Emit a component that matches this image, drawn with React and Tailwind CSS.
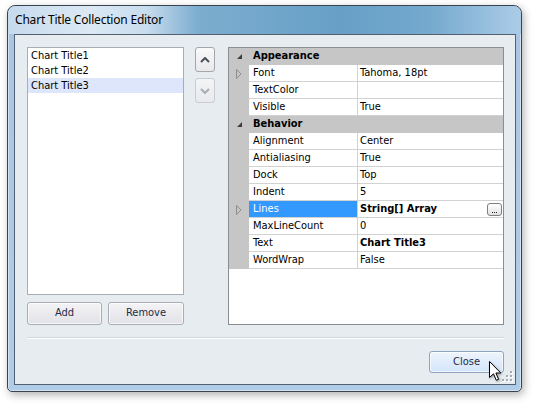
import React from 'react';

const body = "font-['DejaVu_Sans_Condensed','Liberation_Sans',sans-serif] text-[11px]";

const groups = [
  {
    name: 'Appearance',
    rows: [
      { name: 'Font', value: 'Tahoma, 18pt', expand: true },
      { name: 'TextColor', value: '' },
      { name: 'Visible', value: 'True' },
    ],
  },
  {
    name: 'Behavior',
    rows: [
      { name: 'Alignment', value: 'Center' },
      { name: 'Antialiasing', value: 'True' },
      { name: 'Dock', value: 'Top' },
      { name: 'Indent', value: '5' },
      { name: 'Lines', value: 'String[] Array', bold: true, expand: true, selected: true, ellipsis: true },
      { name: 'MaxLineCount', value: '0' },
      { name: 'Text', value: 'Chart Title3', bold: true },
      { name: 'WordWrap', value: 'False' },
    ],
  },
];

const Expanded = () => (
  <svg width="5" height="5" viewBox="0 0 5 5">
    <polygon points="5,0 5,5 0,5" fill="#3d3d3d" />
  </svg>
);

const Collapsed = () => (
  <svg width="6" height="10" viewBox="0 0 6 10">
    <polygon points="0.5,0.5 5,5 0.5,9.5" fill="none" stroke="#8f8f8f" />
  </svg>
);

const Chevron = ({ down, color }) => (
  <svg width="10" height="6" viewBox="0 0 10 6">
    <polyline
      points={down ? '1,1 5,5 9,1' : '1,5 5,1 9,5'}
      fill="none"
      stroke={color}
      strokeWidth="2"
    />
  </svg>
);

const PropRow = ({ row }) => (
  <div className="flex h-[17px]">
    <div className="w-[20px] shrink-0 bg-[#c6c6c6] flex items-center justify-center">
      {row.expand && <Collapsed />}
    </div>
    <div
      className={`w-[109px] shrink-0 border-b border-r border-[#d2d2d2] pl-[4px] leading-[16px] ${
        row.selected ? 'bg-[#3399ff] text-white' : 'bg-white text-black'
      }`}
    >
      {row.name}
    </div>
    <div className="flex-1 flex items-center justify-between border-b border-[#d2d2d2] bg-white pl-[2px] pr-[1px]">
      <span className={`leading-[16px] ${row.bold ? 'font-bold' : ''}`}>{row.value}</span>
      {row.ellipsis && (
        <div className="w-[15px] h-[13px] rounded-[3px] border border-[#7f7f7f] bg-gradient-to-b from-white to-[#e2e2e2] flex items-end justify-center gap-[1px] pb-[2px]">
          <div className="w-[1px] h-[1px] bg-[#222]" />
          <div className="w-[1px] h-[1px] bg-[#222]" />
          <div className="w-[1px] h-[1px] bg-[#222]" />
        </div>
      )}
    </div>
  </div>
);

const PropertyGrid = () => (
  <div className="w-[276px] h-[278px] border border-[#8a8d91] bg-white flex flex-col">
    {groups.map((g) => (
      <div key={g.name}>
        <div className="flex h-[17px] items-center bg-[#c6c6c6]">
          <div className="w-[20px] shrink-0 flex items-center justify-center">
            <Expanded />
          </div>
          <span className="pl-[4px] font-bold text-black">{g.name}</span>
        </div>
        {g.rows.map((r) => (
          <PropRow key={r.name} row={r} />
        ))}
      </div>
    ))}
  </div>
);

const Button = ({ children, className = '' }) => (
  <button
    className={`h-[23px] rounded-[3px] border border-[#a9adb3] bg-gradient-to-b from-[#f4f4f6] to-[#e1e1e7] text-[#1e2b48] shadow-[inset_0_0_0_1px_rgba(255,255,255,0.7)] ${className}`}
  >
    {children}
  </button>
);

const SizeGrip = () => {
  const dots = [
    [8, 0],
    [4, 4],
    [8, 4],
    [0, 8],
    [4, 8],
    [8, 8],
  ];
  return (
    <svg width="11" height="11" viewBox="0 0 11 11" className="absolute right-[2px] bottom-[2px]">
      {dots.map(([x, y]) => (
        <g key={`${x}-${y}`}>
          <rect x={x + 1} y={y + 1} width="2" height="2" fill="#ffffff" />
          <rect x={x} y={y} width="2" height="2" fill="#a3abb5" />
        </g>
      ))}
    </svg>
  );
};

const Cursor = () => (
  <svg
    width="14"
    height="22"
    viewBox="0 0 14 22"
    className="absolute left-[489px] top-[361px] drop-shadow-[1px_1px_1px_rgba(0,0,0,0.35)]"
  >
    <path
      d="M0.5,0.5 L0.5,16.5 L4.5,12.8 L7.3,19.3 L9.6,18.3 L6.9,12 L11.8,12 Z"
      fill="#ffffff"
      stroke="#000000"
      strokeWidth="1"
      strokeLinejoin="round"
    />
  </svg>
);

export default function App() {
  return (
    <div className={`relative w-[535px] h-[407px] bg-white pt-[5px] pl-[7px] ${body}`}>
      <div className="w-[515px] h-[387px] rounded-t-[8px] rounded-b-[5px] border border-[#39424f] bg-gradient-to-b from-[#a8c6e4] to-[#b0cde8] shadow-[inset_0_0_0_1px_rgba(255,255,255,0.45),2px_3px_9px_rgba(0,0,0,0.3)] flex flex-col overflow-hidden">
        <div className="h-[28px] shrink-0 flex items-center pl-[7px] rounded-t-[7px] bg-[linear-gradient(to_right,#c6daed_0%,#dce9f4_16%,#c8dcee_27%,#7cadcf_37%,#679fc6_65%,#75a9ce_82%,#abcce7_100%)] font-['Noto_Sans','Open_Sans',sans-serif] text-[12px] tracking-[-0.2px] text-black">
          Chart Title Collection Editor
        </div>
        <div className="flex-1 flex px-[6px] pb-[6px]">
          <div className="relative flex-1 border border-[#52606f] bg-[#e7ecf0] flex flex-col pt-[12px] pl-[12px] pr-[11px]">
            <div className="flex">
              <div className="w-[157px] shrink-0 flex flex-col">
                <div className="h-[248px] border border-[#a7aeb6] bg-white text-black">
                  <div className="h-[15px] pl-[3px] leading-[15px]">Chart Title1</div>
                  <div className="h-[15px] pl-[3px] leading-[15px]">Chart Title2</div>
                  <div className="h-[15px] pl-[3px] leading-[15px] bg-[#dde6fb]">Chart Title3</div>
                </div>
                <div className="flex gap-[6px] mt-[7px]">
                  <Button className="w-[75px]">Add</Button>
                  <Button className="w-[76px]">Remove</Button>
                </div>
              </div>
              <div className="w-[20px] ml-[11px] shrink-0 flex flex-col gap-[6px]">
                <div className="h-[25px] rounded-[3px] border border-[#a3a7ad] bg-gradient-to-b from-[#f9f9fa] to-[#e9e9ec] flex items-center justify-center">
                  <Chevron color="#4a4f57" />
                </div>
                <div className="h-[25px] rounded-[3px] border border-[#c9ccd0] bg-gradient-to-b from-[#f3f4f6] to-[#e8eaed] flex items-center justify-center">
                  <Chevron down color="#a9adb3" />
                </div>
              </div>
              <div className="ml-[13px]">
                <PropertyGrid />
              </div>
            </div>
            <div className="mt-[12px] h-[2px] border-t border-[#d3d8dd] border-b border-b-white" />
            <div className="flex justify-end mt-[12px]">
              <button className="w-[75px] h-[22px] rounded-[3px] border border-[#8fa3bd] bg-gradient-to-b from-[#eef5fd] to-[#d3e4fa] text-[#1e2b48] shadow-[inset_0_0_0_1px_rgba(255,255,255,0.7)]">
                Close
              </button>
            </div>
            <SizeGrip />
          </div>
        </div>
      </div>
      <Cursor />
    </div>
  );
}
